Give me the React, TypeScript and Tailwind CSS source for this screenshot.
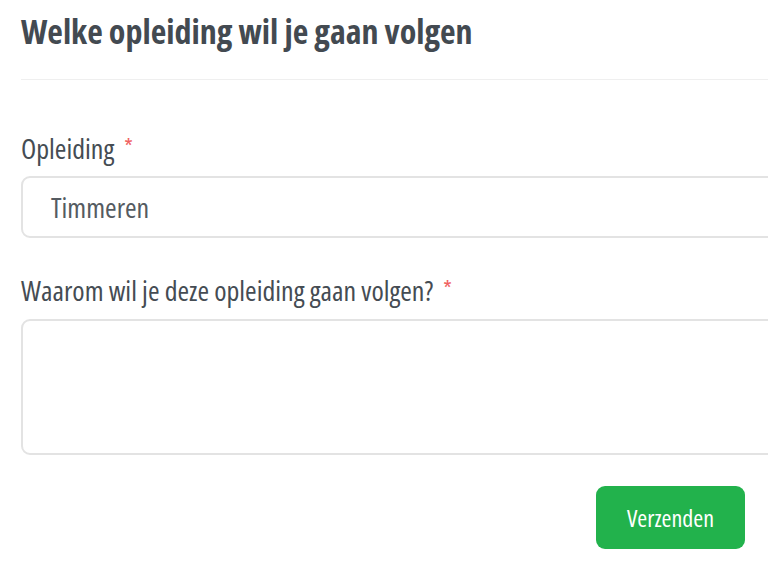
export default function App() {
  return (
    <div className="w-[768px] h-[571px] overflow-hidden bg-white font-['Open_Sans',sans-serif] font-stretch-condensed">
      <div className="w-[800px] pl-[21px]">
        <h1 className="pt-[11px] text-[34px] leading-[41px] font-bold text-[#434a51]">Welke opleiding wil je gaan volgen</h1>
        <div className="mt-[27px] h-px bg-[#efefef]" />
        <label className="mt-[51px] flex items-start text-[28px] leading-[34px] text-[#454c53]">
          Opleiding
          <span className="ml-[10px] mt-[4px] text-[22px] leading-[20px] text-[#f06262]">*</span>
        </label>
        <div className="mt-[11px] h-[62px] rounded-[9px] border-2 border-[#e3e3e3] flex items-center pl-[28px] text-[28px] leading-[34px] text-[#555b61]">
          Timmeren
        </div>
        <label className="mt-[35px] flex items-start text-[28px] leading-[34px] text-[#454c53]">
          Waarom wil je deze opleiding gaan volgen?
          <span className="ml-[10px] mt-[4px] text-[22px] leading-[20px] text-[#f06262]">*</span>
        </label>
        <div className="mt-[12px] h-[136px] rounded-[9px] border-2 border-[#e3e3e3]" />
      </div>
      <div className="flex justify-end pr-[23px] mt-[31px]">
        <button className="w-[149px] h-[63px] rounded-[9px] bg-[#22b24c] text-white text-[24px] leading-[30px]">Verzenden</button>
      </div>
    </div>
  );
}
